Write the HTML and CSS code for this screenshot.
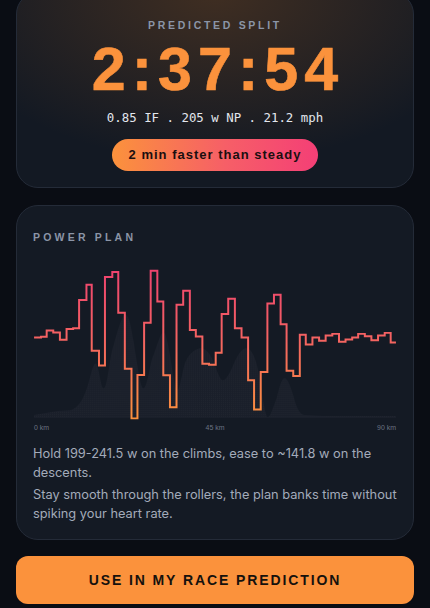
FILE: index.html
```html
<!DOCTYPE html>
<html>
<head>
<meta charset="utf-8">
<link rel="stylesheet" href="styles.css">
</head>
<body>
<div class="page">
  <section class="card split">
    <div class="label">PREDICTED SPLIT</div>
    <div class="time">2:37:54</div>
    <div class="stats">0.85 IF . 205 w NP . 21.2 mph</div>
    <div class="pill">2 min faster than steady</div>
  </section>

  <section class="card plan">
    <div class="label left">POWER PLAN</div>
    <svg class="chart" width="364" height="172" viewBox="0 0 364 172">
      <defs>
        <linearGradient id="lineGrad" gradientUnits="userSpaceOnUse" x1="0" y1="8" x2="0" y2="160">
          <stop offset="0" stop-color="#ef436f"/>
          <stop offset="0.45" stop-color="#f46262"/>
          <stop offset="1" stop-color="#fb923c"/>
        </linearGradient>
        <pattern id="dots" width="2" height="2" patternUnits="userSpaceOnUse">
          <rect width="2" height="2" fill="#1a1f2a"/>
          <rect width="1" height="1" fill="#20252f"/>
        </pattern>
      </defs>
      <path class="elev" d="M0 155 L24 151 L37 150 C44 148 50 140 55 122 C58 110 60 103 62 103 C65 103 67 128 70 128 C74 128 76 95 80 85 C85 66 89 54 92 54 C96 54 98 70 100 80 C104 105 107 128 110 128 C114 128 117 100 120 95 C124 85 127 72 130 72 C133 72 135 86 137 96 C139 110 142 130 144 130 C147 130 150 104 153 100 C156 94 160 90 166 88 C172 87 176 92 180 100 C184 110 187 120 190 120 C193 120 196 114 199 108 C203 98 207 90 212 88 C216 87 220 90 224 104 C228 120 232 157 235 157 C238 157 241 145 244 138 C247 126 249 118 252 118 C255 118 258 126 261 136 C264 148 267 154 272 155 L290 156 L364 156 L364 158 L0 158 Z"/>
      <path class="line" d="M0 77 H7 V76.3 H12.7 V70 H19.3 V72 H26 V79.3 H32.7 V68.3 H39.3 V67.7 H45.3 V39.3 H52.7 V24 H58 V90.3 H65.3 V105 H71.3 V16 H78.7 V11 H84.7 V52 H91.3 V108.3 H98 V158.3 H104 V114.7 H110.7 V62 H117.3 V9.7 H124 V40.7 H130 V115 H136.7 V147 H143.3 V44 H150 V30 H156.7 V69.3 H162.7 V76 H169.3 V103.3 H176 V104.3 H182.7 V92.3 H188.7 V53.3 H195.3 V38 H202 V67.7 H208.7 V77 H215.3 V120 H221.3 V149.3 H228 V111.7 H234.7 V42.7 H241.3 V34 H248 V63.7 H254 V110.3 H260.7 V115.7 H267.3 V74.3 H273.3 V84 H280 V77 H286.7 V80.3 H293.3 V75 H300 V73.3 H306.7 V81.3 H313.3 V79 H320 V77 H326 V73.3 H332.7 V75.7 H339.3 V79.7 H346 V75 H352.7 V72.3 H358.7 V82 H364"/>
      <text class="axis" x="0" y="170">0 km</text>
      <text class="axis" x="182" y="170" text-anchor="middle">45 km</text>
      <text class="axis" x="364" y="170" text-anchor="end">90 km</text>
    </svg>
    <p class="note">Hold 199-241.5 w on the climbs, ease to ~141.8 w on the descents.</p>
    <p class="note">Stay smooth through the rollers, the plan banks time without spiking your heart rate.</p>
  </section>

  <button class="cta">USE IN MY RACE PREDICTION</button>
</div>
</body>
</html>
```

FILE: styles.css
```css
html, body {
  margin: 0;
  padding: 0;
  background: #0a0d14;
  height: 608px;
  overflow: hidden;
}
body {
  font-family: "Liberation Sans", Arial, sans-serif;
}
.page {
  display: flex;
  flex-direction: column;
  gap: 17px;
  padding: 0 16px 0 16px;
  margin-top: -8px;
}
.card {
  border: 1px solid #242b38;
  border-radius: 22px;
  background: #141a24;
}
.split {
  display: flex;
  flex-direction: column;
  align-items: center;
  padding: 26px 0 19px;
  height: 196px;
  box-sizing: border-box;
  background:
    radial-gradient(ellipse 280px 170px at 50% 0%, rgba(125, 75, 32, 0.42), rgba(125, 75, 32, 0) 100%),
    #131923;
}
.label {
  font-size: 10.5px;
  font-weight: 700;
  letter-spacing: 2.7px;
  color: #8b95a7;
  line-height: 12px;
}
.label.left {
  align-self: flex-start;
  letter-spacing: 3.2px;
}
.time {
  margin-top: 5px;
  font-size: 61px;
  font-weight: 700;
  color: #fb923c;
  letter-spacing: 6px;
  line-height: 66px;
  padding-left: 6px;
  -webkit-text-stroke: 0.6px #fb923c;
}
.stats {
  margin-top: 8px;
  font-family: "DejaVu Sans Mono", monospace;
  font-size: 12.4px;
  color: #e3e7ee;
  line-height: 16px;
}
.pill {
  margin-top: 13px;
  height: 32px;
  padding: 0 17px;
  border-radius: 16px;
  background: linear-gradient(90deg, #fb923c 0%, #f65f67 55%, #f43f76 100%);
  color: #1a0f10;
  font-size: 13px;
  font-weight: 700;
  letter-spacing: 1px;
  line-height: 32px;
}
.plan {
  display: flex;
  flex-direction: column;
  padding: 25px 16px 16px;
  height: 335px;
  box-sizing: border-box;
}
.chart {
  display: block;
  margin-top: 18px;
}
.elev {
  fill: url(#dots);
}
.line {
  fill: none;
  stroke: url(#lineGrad);
  stroke-width: 2;
  stroke-linejoin: miter;
}
.axis {
  font-family: "Liberation Sans", Arial, sans-serif;
  font-size: 7px;
  fill: #6b7383;
}
.note {
  margin: 0;
  font-family: Inter, "Liberation Sans", sans-serif;
  font-size: 12.8px;
  line-height: 18.5px;
  color: #a3abba;
}
.chart + .note {
  margin-top: 13px;
}
.note + .note {
  margin-top: 4px;
}
.cta {
  height: 48px;
  margin-top: -1px;
  border: none;
  border-radius: 12px;
  background: #fb923c;
  color: #15110d;
  font-family: "Liberation Sans", Arial, sans-serif;
  font-size: 14px;
  font-weight: 700;
  letter-spacing: 1.9px;
  cursor: pointer;
}
```
